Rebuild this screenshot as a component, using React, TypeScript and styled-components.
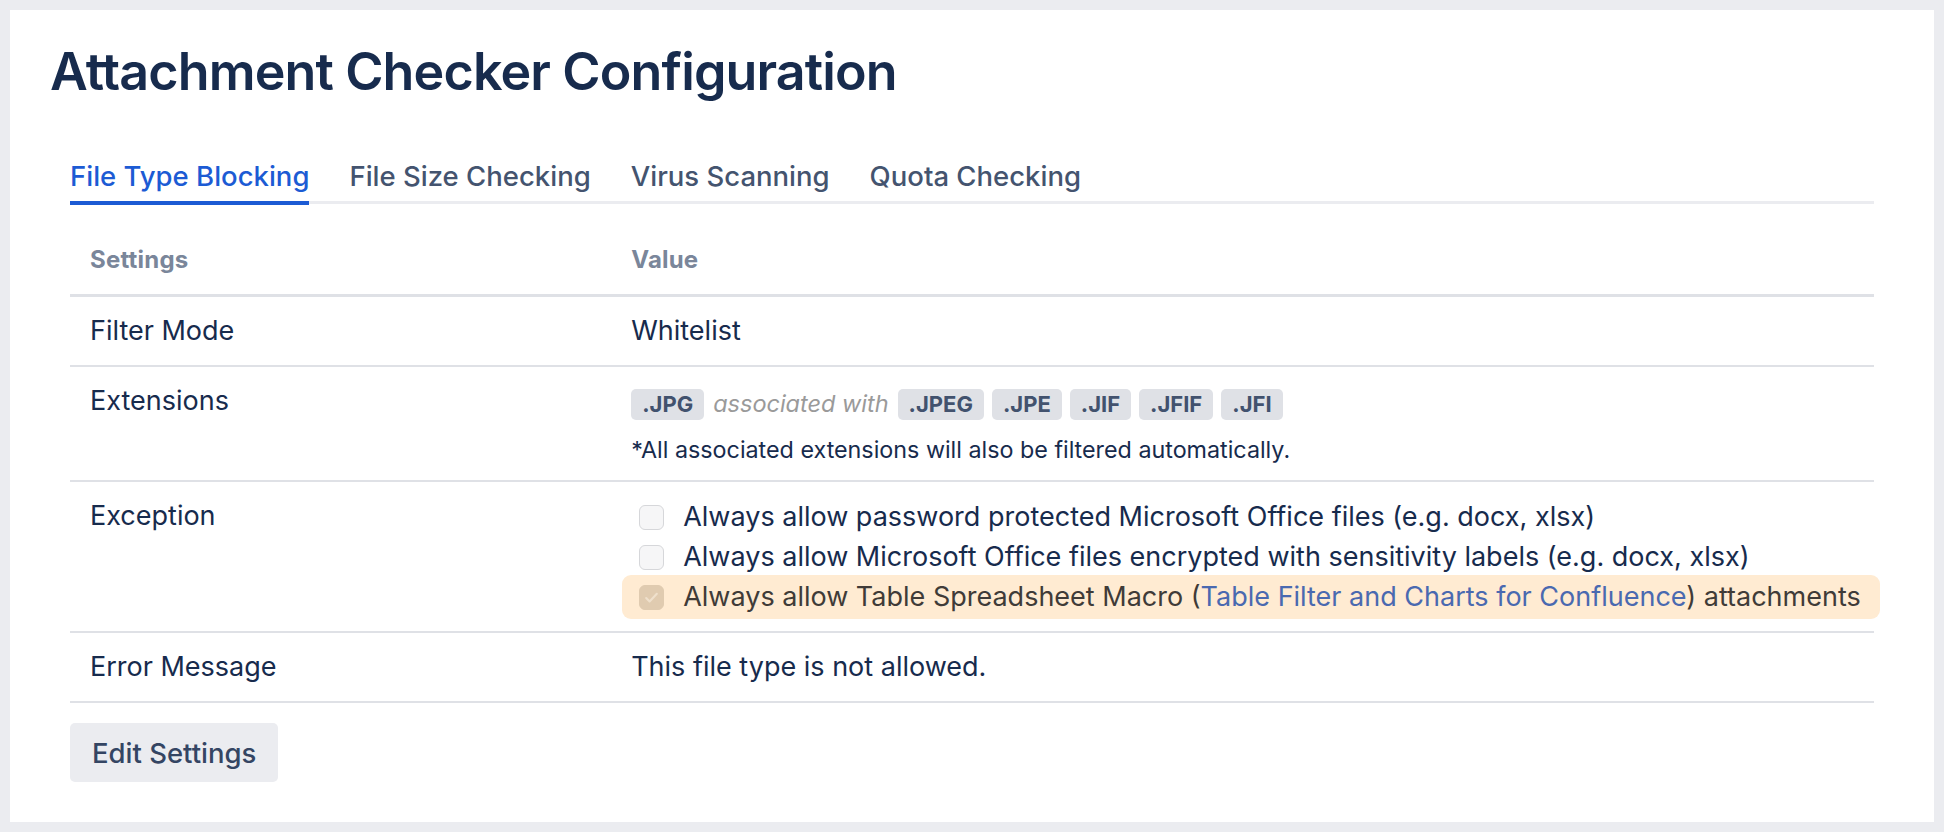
import React from "react";
import styled, { createGlobalStyle } from "styled-components";

const GlobalStyle = createGlobalStyle`
  html, body {
    margin: 0;
    padding: 0;
    background: #ebecf0;
  }
  body {
    font-family: Inter, "Noto Sans", "Liberation Sans", sans-serif;
    color: #172b4d;
  }
  *, *::before, *::after {
    box-sizing: border-box;
  }
`;

const Page = styled.div`
  padding: 10px;
  min-height: 100vh;
`;

const Panel = styled.main`
  background: #ffffff;
  min-height: calc(100vh - 20px);
  padding: 32px 40px 40px;
`;

const Title = styled.h1`
  margin: 0 0 54px;
  font-size: 52px;
  line-height: 60px;
  font-weight: 600;
  color: #172b4d;
  letter-spacing: -0.87px;
`;

const Content = styled.section`
  padding: 0 20px;
`;

const TabList = styled.div`
  display: flex;
  gap: 40px;
  border-bottom: 3px solid #ebecf0;
`;

const Tab = styled.button<{ $active?: boolean }>`
  position: relative;
  background: none;
  border: 0;
  margin: 0;
  padding: 0 0 5px;
  font-family: inherit;
  font-size: 27.5px;
  line-height: 40px;
  font-weight: 500;
  color: ${(p) => (p.$active ? "#1c5bd4" : "#44546f")};
  cursor: pointer;

  &::after {
    content: "";
    position: absolute;
    left: 0;
    right: 0;
    bottom: -4px;
    height: 4px;
    background: ${(p) => (p.$active ? "#1c5bd4" : "transparent")};
  }
`;

const Table = styled.table`
  width: 100%;
  margin-top: 22px;
  border-collapse: collapse;
  table-layout: fixed;
`;

const HeadCell = styled.th<{ $width?: string }>`
  width: ${(p) => p.$width ?? "auto"};
  text-align: left;
  padding: 14px 20px;
  font-size: 24px;
  line-height: 40px;
  font-weight: 700;
  letter-spacing: 0.2px;
  color: #7a869a;
  border-bottom: 3px solid #dfe1e6;
`;

const Cell = styled.td`
  padding: 14px 20px;
  font-size: 27px;
  line-height: 40px;
  font-weight: 400;
  color: #172b4d;
  vertical-align: top;
  border-bottom: 2px solid #dfe1e6;
`;

const TagLine = styled.div`
  display: flex;
  align-items: center;
  gap: 8px;
  height: 40px;
  margin-top: 3px;
`;

const Tag = styled.span`
  display: inline-flex;
  align-items: center;
  height: 31px;
  padding: 0 11px;
  border-radius: 5px;
  background: #dfe1e6;
  color: #42526e;
  font-size: 22px;
  font-weight: 700;
  line-height: 1;
`;

const Assoc = styled.em`
  color: #9a9a9a;
  font-size: 23.5px;
  font-style: italic;
  margin: 0 1px;
`;

const Note = styled.p`
  margin: 10px 0 0;
  font-size: 23.3px;
  line-height: 32px;
  color: #172b4d;
`;

const OptionList = styled.div`
  display: flex;
  flex-direction: column;
  margin-top: 1px;
`;

const Option = styled.label<{ $highlight?: boolean }>`
  display: flex;
  align-items: center;
  gap: 19px;
  width: max-content;
  white-space: nowrap;
  height: ${(p) => (p.$highlight ? "44px" : "40px")};
  margin: ${(p) => (p.$highlight ? "-2px 0 -2px -9px" : "0")};
  padding: ${(p) => (p.$highlight ? "0 19px 0 17px" : "0 0 0 8px")};
  border-radius: 9px;
  background: ${(p) => (p.$highlight ? "#ffebd2" : "transparent")};
  color: ${(p) => (p.$highlight ? "#403b38" : "#172b4d")};
`;

const Box = styled.span<{ $checked?: boolean }>`
  flex: none;
  width: 25px;
  height: 25px;
  border-radius: 6px;
  display: inline-flex;
  align-items: center;
  justify-content: center;
  background: ${(p) => (p.$checked ? "#e0cbb0" : "#f6f6f7")};
  border: 1.5px solid ${(p) => (p.$checked ? "#e0cbb0" : "#d6d7da")};
`;

const Link = styled.a`
  color: #4a69b0;
  text-decoration: none;
`;

const Button = styled.button`
  margin-top: 20px;
  height: 59px;
  padding: 0 22px;
  border: 0;
  border-radius: 5px;
  background: #ebecf0;
  color: #344563;
  font-family: inherit;
  font-size: 27.5px;
  font-weight: 500;
  cursor: pointer;
`;

const Check = () => (
  <svg width="17" height="17" viewBox="0 0 16 16" fill="none">
    <path d="M3 8.5l3.2 3.2L13 4.5" stroke="#efe0cc" strokeWidth="2" strokeLinecap="round" strokeLinejoin="round" />
  </svg>
);

const tabs = ["File Type Blocking", "File Size Checking", "Virus Scanning", "Quota Checking"];
const associated = [".JPEG", ".JPE", ".JIF", ".JFIF", ".JFI"];

export default function App() {
  return (
    <>
      <GlobalStyle />
      <Page>
        <Panel>
          <Title>Attachment Checker Configuration</Title>
          <Content>
            <TabList>
              {tabs.map((t, i) => (
                <Tab key={t} $active={i === 0}>
                  {t}
                </Tab>
              ))}
            </TabList>
            <Table>
              <thead>
                <tr>
                  <HeadCell $width="30%">Settings</HeadCell>
                  <HeadCell>Value</HeadCell>
                </tr>
              </thead>
              <tbody>
                <tr>
                  <Cell>Filter Mode</Cell>
                  <Cell>Whitelist</Cell>
                </tr>
                <tr>
                  <Cell>Extensions</Cell>
                  <Cell>
                    <TagLine>
                      <Tag>.JPG</Tag>
                      <Assoc>associated with</Assoc>
                      {associated.map((e) => (
                        <Tag key={e}>{e}</Tag>
                      ))}
                    </TagLine>
                    <Note>*All associated extensions will also be filtered automatically.</Note>
                  </Cell>
                </tr>
                <tr>
                  <Cell>Exception</Cell>
                  <Cell>
                    <OptionList>
                      <Option>
                        <Box />
                        Always allow password protected Microsoft Office files (e.g. docx, xlsx)
                      </Option>
                      <Option>
                        <Box />
                        Always allow Microsoft Office files encrypted with sensitivity labels (e.g. docx, xlsx)
                      </Option>
                      <Option $highlight>
                        <Box $checked>
                          <Check />
                        </Box>
                        <span>
                          Always allow Table Spreadsheet Macro (<Link href="#">Table Filter and Charts for Confluence</Link>) attachments
                        </span>
                      </Option>
                    </OptionList>
                  </Cell>
                </tr>
                <tr>
                  <Cell>Error Message</Cell>
                  <Cell>This file type is not allowed.</Cell>
                </tr>
              </tbody>
            </Table>
            <Button>Edit Settings</Button>
          </Content>
        </Panel>
      </Page>
    </>
  );
}
